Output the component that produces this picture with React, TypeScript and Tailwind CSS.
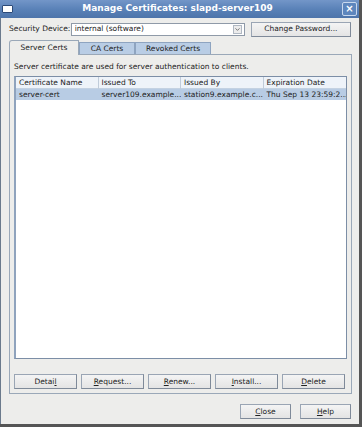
import { ChevronDown } from "lucide-react";

const font = { fontFamily: '"DejaVu Sans", sans-serif' };

const rows = [
  ["server-cert", "server109.example...", "station9.example.c...", "Thu Sep 13 23:59:2..."],
];

function Btn({ label, u, className }: { label: string; u?: number; className: string }) {
  return (
    <button
      className={`flex items-center justify-center border border-[#9aa5b4] border-b-[#7f8a99] border-r-[#7f8a99] bg-gradient-to-b from-[#f4f4f4] to-[#e4e4e4] text-[7.5px] text-[#222] ${className}`}
    >
      {u === undefined ? (
        label
      ) : (
        <span>
          {label.slice(0, u)}
          <span className="underline">{label[u]}</span>
          {label.slice(u + 1)}
        </span>
      )}
    </button>
  );
}

export default function App() {
  return (
    <div className="h-[430px] w-[364px] bg-white" style={font}>
      <div className="flex h-[427px] w-[362px] flex-col border-b-[3px] border-r-[3px] border-b-[#555] border-r-[#555]">
        {/* title bar */}
        <div className="flex h-[18px] items-center bg-gradient-to-b from-[#7396c8] via-[#5a82b8] to-[#4d74aa] px-[2px]">
          <div className="h-[8px] w-[11px] rounded-[1px] border border-[#2c4a78] bg-white" />
          <div className="flex-1 text-center text-[9px] font-bold text-white">
            Manage Certificates: slapd-server109
          </div>
          <div className="flex h-[14px] w-[15px] items-center justify-center rounded-[2px] border border-[#c8d8ee] bg-[#5d86bd] text-[10px] font-bold leading-none text-white">
            ×
          </div>
        </div>

        {/* body */}
        <div className="flex flex-1 flex-col border-l border-[#6b7a8c] bg-[#ededeb] px-[8px]">
          <div className="mt-[3px] flex h-[16px] items-center text-[7.5px] text-[#222]">
            <span className="w-[62px]">Security Device:</span>
            <div className="flex h-[13px] w-[175px] items-center justify-between border border-[#8f9aa8] bg-white pl-[3px] pr-[2px]">
              <span>internal (software)</span>
              <div className="flex h-[9px] w-[9px] items-center justify-center border border-[#b0b8c2] bg-[#ececec]">
                <ChevronDown className="h-[7px] w-[7px] text-[#666]" strokeWidth={3} />
              </div>
            </div>
            <Btn label="Change Password..." className="ml-[6px] h-[15px] w-[101px]" />
          </div>

          {/* tabs */}
          <div className="mt-[3px] flex h-[15px] items-end text-[7.5px] text-[#222]">
            <div className="relative z-10 flex h-[15px] w-[70px] items-center justify-center rounded-tl-[3px] border border-b-0 border-[#9aa8b8] bg-[#ededeb]">
              Server Certs
            </div>
            <div className="flex h-[13px] w-[56px] items-center justify-center border border-b-0 border-[#8ea4c0] bg-[#b9cde5]">
              CA Certs
            </div>
            <div className="flex h-[13px] w-[76px] items-center justify-center border border-b-0 border-[#8ea4c0] bg-[#b9cde5]">
              Revoked Certs
            </div>
          </div>

          {/* panel */}
          <div className="-mt-px flex h-[340px] w-[343px] flex-col border border-[#9aa8b8] bg-[#ededeb] px-[4px]">
            <div className="mt-[6px] text-[7.5px] text-[#222]">
              Server certificate are used for server authentication to clients.
            </div>
            <div className="mt-[4px] flex h-[283px] flex-col border border-[#7c8ea6] border-l-2 border-l-[#8fa3bd] bg-white">
              <div className="grid h-[12px] grid-cols-4 border-b border-[#c4d2e2] bg-[#eef3f9] text-[7.5px] text-[#222]">
                {["Certificate Name", "Issued To", "Issued By", "Expiration Date"].map((h, i) => (
                  <div key={h} className={`flex items-center pl-[3px] ${i < 3 ? "border-r border-[#c0ccda]" : ""}`}>
                    {h}
                  </div>
                ))}
              </div>
              {rows.map((r) => (
                <div key={r[0]} className="grid h-[11px] grid-cols-4 bg-[#b8cce4] text-[7.5px] text-[#222]">
                  {r.map((c) => (
                    <div key={c} className="flex items-center overflow-hidden whitespace-nowrap pl-[3px]">
                      {c}
                    </div>
                  ))}
                </div>
              ))}
            </div>
            <div className="mt-[15px] flex gap-[4px]">
              <Btn label="Detail" u={5} className="h-[15px] w-[63px]" />
              <Btn label="Request..." u={0} className="h-[15px] w-[63px]" />
              <Btn label="Renew..." u={0} className="h-[15px] w-[63px]" />
              <Btn label="Install..." u={0} className="h-[15px] w-[63px]" />
              <Btn label="Delete" u={0} className="h-[15px] w-[63px]" />
            </div>
          </div>

          <div className="mt-[10px] flex justify-end gap-[9px]">
            <Btn label="Close" u={0} className="h-[15px] w-[51px]" />
            <Btn label="Help" u={0} className="h-[15px] w-[51px]" />
          </div>
        </div>
      </div>
    </div>
  );
}
